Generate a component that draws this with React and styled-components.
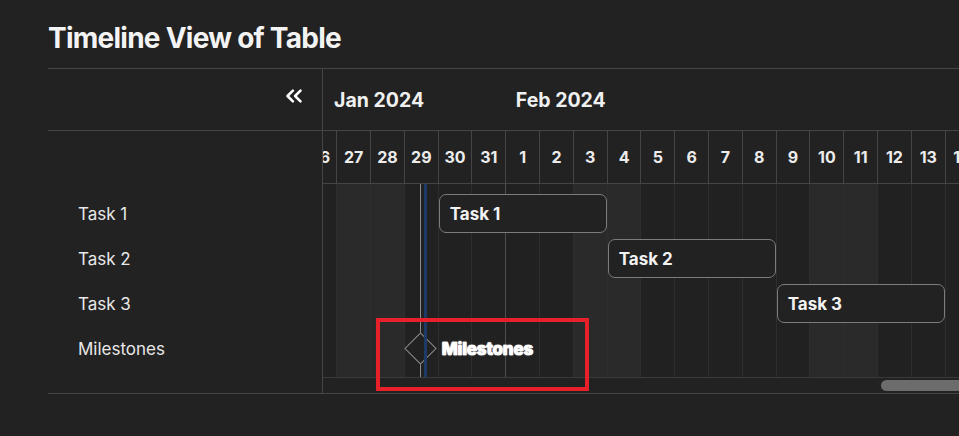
import React from 'react';
import styled, { createGlobalStyle } from 'styled-components';
import { ChevronsLeft } from 'lucide-react';

const COL = 33.8;
const START = Date.UTC(2024, 0, 26);
const DAYS = Array.from({ length: 20 }, (_, i) => {
  const d = new Date(START + i * 86400000);
  return { i, day: d.getUTCDate(), weekend: d.getUTCDay() === 0 || d.getUTCDay() === 6, monthEnd: d.getUTCDate() === 31 };
});

const TASKS = [
  { name: 'Task 1', start: 4, span: 5 },
  { name: 'Task 2', start: 9, span: 5 },
  { name: 'Task 3', start: 14, span: 5 },
];

const ROWS = ['Task 1', 'Task 2', 'Task 3', 'Milestones'];

const GlobalStyle = createGlobalStyle`
  html, body { margin: 0; padding: 0; background: #222222; overflow: hidden; }
  body { font-family: Inter, "Noto Sans", sans-serif; color: #ededed; }
  * { box-sizing: border-box; }
`;

const Page = styled.div`
  position: relative;
  padding: 21px 0 0 48px;
  width: 959px;
  height: 436px;
`;

const Title = styled.h1`
  margin: 0;
  font: 700 28px/34px Inter, sans-serif;
  letter-spacing: -0.75px;
  color: #f3f3f3;
`;

const Table = styled.div`
  margin-top: 13px;
  display: flex;
  border-top: 1px solid #454545;
  border-bottom: 1px solid #454545;
`;

const LeftPanel = styled.div`
  width: 275px;
  flex: none;
  border-right: 1px solid #454545;
  display: flex;
  flex-direction: column;
`;

const LeftHeadTop = styled.div`
  height: 62px;
  border-bottom: 1px solid #454545;
  display: flex;
  justify-content: flex-end;
  align-items: flex-start;
  padding: 14px 15px 0 0;
  color: #ffffff;
`;

const LeftHeadSub = styled.div`
  height: 53px;
`;

const LeftBody = styled.div`
  height: 209px;
  padding-top: 7px;
`;

const LeftRow = styled.div`
  height: 45px;
  display: flex;
  align-items: center;
  padding-left: 30px;
  font-size: 17px;
  font-weight: 400;
  color: #e8e8e8;
`;

const Timeline = styled.div`
  flex: 1;
  min-width: 0;
  overflow: hidden;
`;

const Track = styled.div`
  margin-left: -19.5px;
  width: ${20 * COL}px;
`;

const Grid = styled.div`
  display: grid;
  grid-template-columns: repeat(20, ${COL}px);
`;

const MonthRow = styled(Grid)`
  height: 62px;
  border-bottom: 1px solid #454545;
`;

const MonthCell = styled.div`
  grid-column: ${(p) => p.$start + 1} / span ${(p) => p.$span};
  display: flex;
  align-items: center;
  padding-left: ${(p) => p.$pad}px;
  font-size: 19.5px;
  font-weight: 700;
  color: #f0f0f0;
  white-space: nowrap;
`;

const DayRow = styled(Grid)`
  height: 53px;
  border-bottom: 1px solid #454545;
`;

const DayCell = styled.div`
  border-right: 1px solid #454545;
  display: flex;
  align-items: center;
  justify-content: center;
  font-size: 16px;
  font-weight: 700;
  color: #ececec;
`;

const Body = styled(Grid)`
  position: relative;
  height: 194px;
  border-bottom: 1px solid #3a3a3a;
  grid-template-rows: 7px repeat(4, 45px) 1fr;
`;

const BodyCol = styled.div`
  grid-row: 1 / -1;
  grid-column: ${(p) => p.$i + 1};
  background: ${(p) => (p.$weekend ? '#2a2a2a' : '#212121')};
  border-right: 1px solid ${(p) => (p.$monthEnd ? '#4d4d4d' : '#2e2e2e')};
`;

const Bar = styled.div`
  grid-row: ${(p) => p.$row + 2};
  grid-column: ${(p) => p.$start + 1} / span ${(p) => p.$span};
  align-self: center;
  height: 39px;
  margin-right: 1px;
  z-index: 1;
  border: 1px solid #7c7c7c;
  border-radius: 7px;
  background: #222222;
  display: flex;
  align-items: center;
  padding-left: 10px;
  font-size: 17px;
  font-weight: 700;
  color: #f2f2f2;
`;

const MarkerLine = styled.div`
  position: absolute;
  top: 0;
  bottom: 0;
  width: ${(p) => p.$w}px;
  background: ${(p) => p.$color};
  z-index: ${(p) => p.$z};
`;

const Milestone = styled.div`
  position: absolute;
  top: 149.5px;
  height: 30px;
  display: flex;
  align-items: center;
  gap: 6px;
  z-index: 2;
`;

const Diamond = styled.div`
  width: 30px;
  height: 30px;
  display: flex;
  align-items: center;
  justify-content: center;
  &::before {
    content: '';
    width: 21px;
    height: 21px;
    border: 1px solid #8a8a8a;
    background: #212121;
    transform: rotate(45deg);
  }
`;

const MilestoneLabel = styled.span`
  font-size: 17px;
  font-weight: 800;
  color: #ffffff;
  -webkit-text-stroke: 0.6px #ffffff;
  text-shadow: 0 0 1.5px #ffffff, 0 0 1px #ffffff;
  letter-spacing: -0.2px;
  white-space: nowrap;
`;

const ScrollTrack = styled.div`
  height: 15px;
  padding: 2px 0 0 ${(p) => p.$offset}px;
`;

const Thumb = styled.div`
  width: 120px;
  height: 11px;
  border-radius: 6px;
  background: #6c6c6c;
`;

const Annotation = styled.div`
  position: absolute;
  left: 376px;
  top: 318px;
  width: 213px;
  height: 73px;
  border: 4px solid #e8202a;
  pointer-events: none;
  z-index: 10;
`;

export default function App() {
  const milestoneX = 3.47 * COL;
  return (
    <>
      <GlobalStyle />
      <Page>
        <Title>Timeline View of Table</Title>
        <Table>
          <LeftPanel>
            <LeftHeadTop>
              <ChevronsLeft size={26} strokeWidth={2.4} />
            </LeftHeadTop>
            <LeftHeadSub />
            <LeftBody>
              {ROWS.map((r) => (
                <LeftRow key={r}>{r}</LeftRow>
              ))}
            </LeftBody>
          </LeftPanel>
          <Timeline>
            <Track>
              <MonthRow>
                <MonthCell $start={0} $span={6} $pad={30.5}>Jan 2024</MonthCell>
                <MonthCell $start={6} $span={14} $pad={9.5}>Feb 2024</MonthCell>
              </MonthRow>
              <DayRow>
                {DAYS.map((d) => (
                  <DayCell key={d.i}>{d.day}</DayCell>
                ))}
              </DayRow>
              <Body>
                {DAYS.map((d) => (
                  <BodyCol key={d.i} $i={d.i} $weekend={d.weekend} $monthEnd={d.monthEnd} />
                ))}
                {TASKS.map((t, k) => (
                  <Bar key={t.name} $row={k} $start={t.start} $span={t.span}>
                    {t.name}
                  </Bar>
                ))}
                <MarkerLine $w={1} $color="#8c8c8c" $z={1} style={{ left: milestoneX - 0.5 }} />
                <Milestone style={{ left: milestoneX - 15 }}>
                  <Diamond />
                  <MilestoneLabel>Milestones</MilestoneLabel>
                </Milestone>
                <MarkerLine $w={3} $color="#1d3b64" $z={3} style={{ left: 120.5 }} />
              </Body>
            </Track>
            <ScrollTrack $offset={558}>
              <Thumb />
            </ScrollTrack>
          </Timeline>
        </Table>
        <Annotation />
      </Page>
    </>
  );
}
